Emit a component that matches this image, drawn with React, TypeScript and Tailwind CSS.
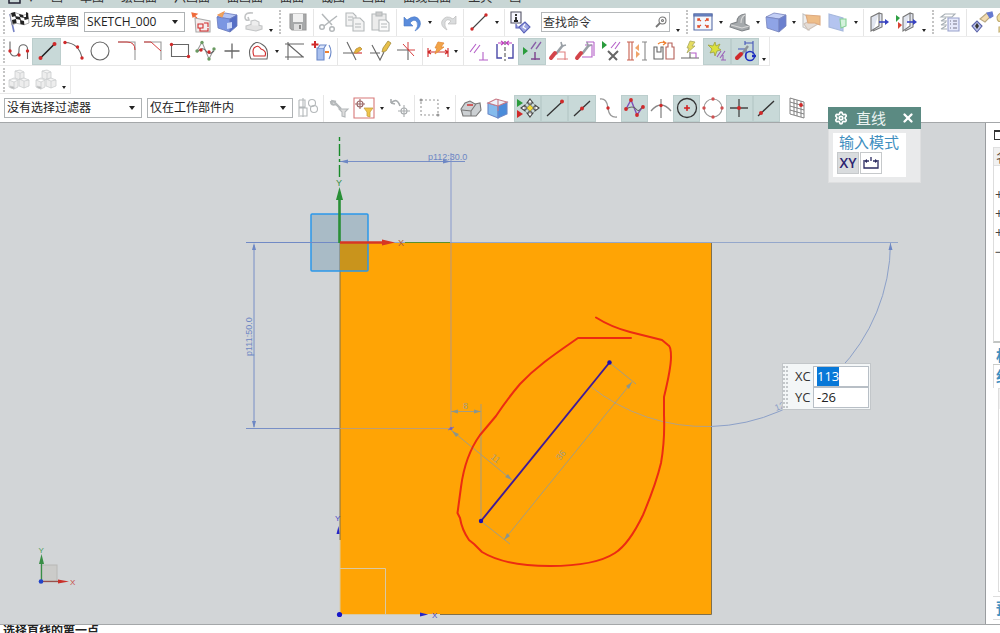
import { useEffect, useRef } from "react";
import type { ReactNode } from "react";
import { Settings, X } from "lucide-react";

const G = "#777";
const R = "#d02a2a";
const L = "#b4b8ba";
const M = "#b45fc8";

function Ic({ children }: { children: ReactNode }) {
  return (
    <svg viewBox="0 0 24 24" className="size-6 shrink-0" fill="none" stroke="#666" strokeWidth="1.1" aria-hidden="true">
      {children}
    </svg>
  );
}

function Dots({ at, c = R, r = 1.7 }: { at: number[][]; c?: string; r?: number }) {
  return (
    <>
      {at.map(([x, y]) => (
        <circle key={`${x}-${y}`} cx={x} cy={y} r={r} fill={c} stroke="none" />
      ))}
    </>
  );
}

function Tool({ label, on, children }: { label: string; on?: boolean; children: ReactNode }) {
  return (
    <button
      type="button"
      aria-label={label}
      className={
        on
          ? "flex h-[27px] min-w-0 flex-1 items-center justify-center border border-[#bccecd] bg-[#c8d9d8]"
          : "flex h-[27px] min-w-0 flex-1 items-center justify-center"
      }
    >
      <Ic>{children}</Ic>
    </button>
  );
}

function Drop({ label }: { label: string }) {
  return (
    <button type="button" aria-label={label} className="flex h-[27px] w-[10px] shrink-0 items-center justify-center">
      <svg viewBox="0 0 4 3" className="h-[3px] w-1" fill="#222">
        <path d="M0 0h4L2 3z" />
      </svg>
    </button>
  );
}

function More({ label }: { label: string }) {
  return (
    <button type="button" aria-label={label} className="flex h-[27px] w-[10px] shrink-0 items-end justify-center pb-1">
      <svg viewBox="0 0 4 3" className="h-[3px] w-1" fill="#222">
        <path d="M0 0h4L2 3z" />
      </svg>
    </button>
  );
}

const Sep = () => <div className="flex h-[27px] w-[5px] shrink-0 justify-center"><div className="w-px bg-[#e6e6e6]" /></div>;
const Grip = () => <div className="ml-[3px] h-6 w-0 shrink-0 border-l-2 border-dotted border-[#c4c4c4]" />;

function Pick({ label, value, cls }: { label: string; value: string; cls: string }) {
  return (
    <div className={`relative shrink-0 ${cls}`}>
      <select aria-label={label} className="block h-5 w-full appearance-none rounded-none border border-[#aeb2b4] bg-white px-0.5 text-xs leading-4 text-[#222] outline-none">
        <option>{value}</option>
      </select>
      <svg viewBox="0 0 6 4" className="pointer-events-none absolute top-2 right-[7px] h-1 w-[6px]" fill="#222">
        <path d="M0 0h6L3 4z" />
      </svg>
    </div>
  );
}

function Cube({ a, b, c, s }: { a: string; b: string; c: string; s: string }) {
  return (
    <g stroke={s} strokeWidth="0.8" strokeLinejoin="round">
      <path d="M2 7l8-4 12 2-7 4z" fill={a} />
      <path d="M2 7l13 2v13L3 18z" fill={b} />
      <path d="M15 9l7-4v11l-7 6z" fill={c} />
    </g>
  );
}

function GreyCubes() {
  return (
    <g stroke="#cccecf" strokeWidth="0.8" fill="#ededed">
      <path d="M8 3l5-1 4 2v6l-4 2-5-2zM8 3l5 2 4-1M13 5v6" />
      <path d="M2 12l5-2 4 2v7l-4 2-5-2zM2 12l5 2 4-2M7 14v7" />
      <path d="M12 11l5-1 5 2v6l-5 2-5-2zM12 11l5 2 5-1M17 13v7" />
      <path d="M3 18l4 1v2l-4-1.500z" fill="#b5b5b5" />
    </g>
  );
}

function Wrench() {
  return (
    <>
      <path d="M9 15L16 6" stroke="#9aa0a6" strokeWidth="2.6" />
      <path d="M14 3l1 4 4-1" stroke="#9aa0a6" strokeWidth="1.6" />
      <path d="M4 19l4-5" stroke="#d3444a" strokeWidth="4" strokeLinecap="round" />
    </>
  );
}

function Pencil() {
  return <path d="M14 13l1-4 5-7 3 2-5 8z" fill="#e8c04a" stroke="#a38b3c" strokeWidth="0.8" />;
}

function MainBar() {
  return (
    <div className="flex h-[29px] shrink-0 items-center overflow-hidden border-b border-[#ececec]">
      <Grip />
      <button type="button" className="flex h-[27px] w-[79px] shrink-0 items-center gap-px pl-[3px] text-xs whitespace-nowrap text-[#222]">
        <svg viewBox="0 0 22 24" className="h-6 w-[22px] shrink-0" aria-hidden="true">
          <path d="M2 4l4 18" stroke="#7480c4" strokeWidth="1.6" />
          <path d="M2 4q5-3 9 0t9-1l1 10q-5 3-9 1t-8 1z" fill="#fff" stroke="#777" strokeWidth="0.6" />
          <path d="M3 3l4-1 1 4-4 1zM11 4l4 1 1 3-4-1zM7 6l5 1 1 3-5-1zM16 7l4-1 .6 3-4 1zM4 10l4-1 .6 4-4 1zM12 10l4 1 .4 4-4-1zM18 2l2 1v3l-2 1z" fill="#222" />
        </svg>
        完成草图
      </button>
      <Pick label="草图名称" value="SKETCH_000" cls="w-[101px]" />
      <div className="ml-[3px] flex w-[78px] shrink-0">
        <Tool label="定向视图到草图">
          <path d="M6 8l15 3v11H7z" fill="#f4ecec" stroke="#aaa" />
          <path d="M9 14h5v4H9zM15 13h4v4M11 18v3h8v-3" stroke={R} />
          <path d="M4 5l4 3M3 3l1 4 4-3z" fill="#ef6a3a" stroke="#ef6a3a" />
        </Tool>
        <Tool label="定向视图到模型">
          <Cube a="#b3c4f5" b="#7b96e2" c="#566fc6" s="#6a7abc" />
          <path d="M12 13l5-1v6l-5 1z" fill="#cad7fa" stroke="none" />
          <path d="M3 5l6-3-2 5z" fill="#efa85a" stroke="#ef9a5a" />
        </Tool>
        <Tool label="重新附着">
          <path d="M5 16l6-2 10 2v3l-6 2-10-2z" fill="#e2e2e2" stroke="#c3c5c6" />
          <path d="M10 15v-4l4-1 4 2v4" fill="#eee" stroke="#c3c5c6" />
          <path d="M12 3q-8-1-8 4 0 4 4 3l-1-3" stroke="#c3c5c6" strokeWidth="1.6" />
        </Tool>
      </div>
      <More label="更多草图命令" />
      <Grip />
      <div className="ml-1 flex w-[26px] shrink-0">
        <Tool label="保存">
          <path d="M4 4h16v16H6l-2-2z" fill="#a7a9aa" stroke="#999" />
          <path d="M7 4h10v8H7z" fill="#f0f0f0" stroke="none" />
          <path d="M8 14h8v6H8z" fill="#ddd" stroke="none" /><path d="M13 15h2v4h-2z" fill="#888" stroke="none" />
        </Tool>
      </div>
      <Sep />
      <div className="flex w-[78px] shrink-0">
        <Tool label="剪切">
          <g stroke={L} strokeWidth="1.5"><path d="M7 16L20 6M5 4l10 11" /><circle cx="5" cy="17" r="2.3" /><circle cx="15" cy="19" r="2.3" /></g>
        </Tool>
        <Tool label="复制">
          <g stroke={L} fill="#f3f3f3"><path d="M3 3h7l3 3v10H3z" /><path d="M10 8h7l4 4v9H10z" /><path d="M5 7h5M5 10h4M12 14h6M12 17h6" /></g>
        </Tool>
        <Tool label="粘贴">
          <g stroke={L}><path d="M3 4h14v16H3z" fill="#ececec" /><path d="M7 2h6v4H7z" fill="#ccc" /><path d="M10 10h7l3 3v8H10z" fill="#fafafa" /><path d="M12 14h6M12 17h6" /></g>
        </Tool>
      </div>
      <Sep />
      <div className="flex w-[26px] shrink-0">
        <Tool label="撤销"><path d="M4 7v9h9l-3-3q4-5 7-1 2 4-2 9 7-4 5-10-4-8-13-1z" fill="#5a8cdc" stroke="#4a78c4" strokeWidth="0.6" /></Tool>
      </div>
      <Drop label="撤销列表" />
      <div className="flex w-[26px] shrink-0">
        <Tool label="重做"><path d="M20 6v8h-8l3-3q-4-3-6 1-1 4 2 8-7-4-5-9 4-7 11-2z" fill="#dadcdd" stroke="#bbb" strokeWidth="0.7" /></Tool>
      </div>
      <Sep />
      <div className="flex w-[26px] shrink-0">
        <Tool label="直线工具"><path d="M5 19L19 5" stroke="#444" /><Dots at={[[5, 19], [19, 5]]} /></Tool>
      </div>
      <Drop label="直线选项" />
      <Sep />
      <div className="flex w-[26px] shrink-0">
        <Tool label="命令查找器">
          <path d="M3 2h10v11H3z" stroke="#556" fill="#f6f6ff" /><path d="M8 4v2M8 7v4M6 11h4" stroke="#222" strokeWidth="1.8" />
          <path d="M8 14v4h4M11 17l6-5 5 5-6 6z" stroke="#5a62b8" fill="#9fa6e2" /><path d="M17 14l-2 3 3 2" stroke="#fff" />
        </Tool>
      </div>
      <div className="relative ml-2 w-[129px] shrink-0">
        <input aria-label="查找命令" placeholder="查找命令" className="block h-5 w-full border border-[#b5b8ba] bg-white px-px text-xs text-[#333] outline-none placeholder:text-[#333]" />
        <svg viewBox="0 0 12 12" className="pointer-events-none absolute top-1 right-[3px] size-3" fill="none" stroke="#777" strokeWidth="1.1">
          <circle cx="7.500" cy="4.500" r="3.500" /><circle cx="7.500" cy="4.500" r="1" /><path d="M5 7l-4 4" strokeWidth="1.8" />
        </svg>
      </div>
      <div className="ml-[3px] flex"><More label="更多查找选项" /></div>
      <Grip />
      <div className="ml-[2px] flex w-[26px] shrink-0">
        <Tool label="适合窗口">
          <path d="M3 4h18v16H3z" fill="#f4f7fc" stroke="#5a6ea8" /><path d="M3 4h18v2H3z" fill="#6f8fd0" stroke="#5a6ea8" />
          <path d="M7 9l3 2M7 11V9h2M17 9l-3 2M15 9h2v2M7 17l3-2M7 15v2h2M17 17l-3-2M15 17h2v-2" stroke="#e0502f" strokeWidth="1.400" />
        </Tool>
      </div>
      <Drop label="窗口选项" />
      <div className="flex w-[27px] shrink-0">
        <Tool label="编辑截面"><path d="M9 12q0-7 8-8v10l4 2v3l-7 2-12-4 1-3z" fill="#a6aaad" stroke="#808488" /><path d="M13 13q0-6 4-8M3 15l11 3 7-2" stroke="#d8d8d8" /></Tool>
      </div>
      <Drop label="截面选项" />
      <div className="flex w-[26px] shrink-0"><Tool label="着色"><Cube a="#c3cff6" b="#8fa4e6" c="#6a7fce" s="#7683bd" /></Tool></div>
      <Drop label="着色选项" />
      <div className="flex w-[52px] shrink-0">
        <Tool label="显示面"><path d="M3 4l6 3v13l-6-3z" fill="#eee" stroke="#c4c4c4" /><path d="M4 14l5-3 9-1v4l-10 6z" fill="#e4dcd6" stroke="#cfc2b8" /><path d="M6 5l14 1v9l-5-2H8z" fill="#eebd88" stroke="#ddaa80" /></Tool>
        <Tool label="层设置"><path d="M3 4l14 4v13L3 17z" fill="#b4c4ef" stroke="#a6b8dd" /><path d="M14 9h6v7l-5 2z" fill="#d4f2dc" stroke="#86cf96" /></Tool>
      </div>
      <Drop label="层选项" />
      <Sep />
      <div className="flex w-[53px] shrink-0">
        <Tool label="移动面"><path d="M4 7l8-4v13l-8 5zM6 21l9-4V4l-3-1" fill="#e1e5ef" stroke="#777" /><path d="M12 12h7" stroke="#3742c0" strokeWidth="1.6" /><path d="M18 9l4 3-4 3z" fill="#3742c0" stroke="none" /></Tool>
        <Tool label="拉出面"><path d="M9 7l7-4v13l-7 5zM11 21l8-4V4l-3-1" fill="#e1e5ef" stroke="#777" /><path d="M13 12h6" stroke="#3742c0" strokeWidth="1.6" /><path d="M19 9l4 3-4 3z" fill="#3742c0" stroke="none" /><path d="M2 5l4 3-4 4z" fill="#2d9f43" stroke="none" /><path d="M4 12l4 3-4 4z" fill="#d94434" stroke="none" /></Tool>
      </div>
      <More label="更多视图命令" />
      <Grip />
      <div className="ml-[2px] flex w-[28px] shrink-0">
        <Tool label="层列表"><g stroke="#a8b0b6"><path d="M3 7l4-3h10l-3 3zM3 11l5-3M3 15l5-3M3 19l5-3M3 11h6M3 15h6M3 19h6" /><path d="M10 8h11v13H10z" fill="#e6e9fa" stroke="#98a1cc" /><path d="M12 11h1M15 11h4M12 14h1M15 14h4M12 18h1M15 18h4" stroke="#778" /></g></Tool>
      </div>
      <Sep />
      <div className="flex w-[52px] shrink-0">
        <Tool label="测量距离"><path d="M2 16l5-5 5 5-5 6z" fill="#b9bfe8" stroke="#5a62a8" /><path d="M7 13l-2 3 2 3 2-3z" fill="#333" stroke="none" /><path d="M10 9l7-6 3 4-5 5z" fill="#f3dcb0" stroke="#b9a880" /><path d="M17 3l5-1 1 4-3 2z" fill="#667ad0" stroke="#667ad0" /></Tool>
        <Tool label="测量角度"><path d="M1 7q3-6 8-3l-3 7q-5 2-5-4zM3 17l7-2v5l-7 2z" fill="#f0dfa0" stroke="#c0ac70" /></Tool>
      </div>
    </div>
  );
}

function SketchBar() {
  return (
    <div className="flex h-[29px] shrink-0">
      <div className="flex h-[29px] items-center border-r border-b border-[#e8e8e8]">
        <Grip />
        <div className="ml-px flex w-[266px] shrink-0">
          <Tool label="轮廓"><path d="M3 2.500V12a4.500 5 0 0 0 9 0V10a4 4 0 0 1 8.500 0V20" /><Dots at={[[3, 12], [12, 16], [20.500, 12]]} /></Tool>
          <Tool label="直线" on><path d="M5.500 19L19.500 5" stroke="#222" strokeWidth="1.600" /><Dots at={[[5.500, 19], [19.500, 5]]} r={2} /></Tool>
          <Tool label="圆弧"><path d="M3 3.500Q17 4 20 19" /><Dots at={[[3, 3.500], [15.500, 8], [20, 19]]} /></Tool>
          <Tool label="圆"><circle cx="12" cy="12" r="9" /></Tool>
          <Tool label="圆角"><path d="M3 3h17v18" stroke="#999" /><path d="M3 3h9q8 0 8 8" stroke={R} strokeWidth="0.900" /></Tool>
          <Tool label="倒斜角"><path d="M3 3h17v18" stroke="#999" /><path d="M3 3h7l10 9" stroke={R} strokeWidth="0.900" /></Tool>
          <Tool label="矩形"><path d="M3.500 5.500h17v12h-17z" /><Dots at={[[3.500, 5.500], [20.500, 17.500]]} /></Tool>
          <Tool label="艺术样条"><path d="M3 12L8 3l7 17 5-10" stroke="#999" /><path d="M3 13q6-6 9-1t8 0" /><Dots at={[[3, 12], [8, 3.500], [15, 20], [20, 10]]} c="#6a9a62" /><Dots at={[[7, 11], [15, 13]]} /></Tool>
          <Tool label="点"><path d="M12 4.500v15M4.500 12h15" strokeWidth="1.300" /></Tool>
          <Tool label="偏置曲线"><path d="M4 20q-3-7 0-12 5-8 12-2 6 4 4 14z" /><path d="M7 17q-2-5 0-8 4-4 7 1 6 2 4 7z" stroke={R} /></Tool>
        </div>
        <Drop label="曲线选项" />
        <div className="flex w-[53px] shrink-0">
          <Tool label="派生直线"><path d="M2 5h19M5 3v18M2 18h19M5 5l15 13" /></Tool>
          <Tool label="添加现有曲线"><path d="M7 9h7v12H7z" fill="#a9c0ee" stroke="#6a88c8" /><path d="M8 9l2-3h6l-2 3" fill="#dce6fb" stroke="#6a88c8" /><path d="M5 2v7M1.500 5.500h7" stroke="#d02a2a" strokeWidth="2" /><path d="M19 6q4 7 0 14" stroke="#6a88c8" /><path d="M15 13h4" stroke="#ef8030" strokeWidth="2" /></Tool>
        </div>
        <Sep />
        <div className="flex w-[80px] shrink-0">
          <Tool label="快速修剪"><path d="M6 3l9 18M2 14h11" /><path d="M13 14h8" stroke={R} /><path d="M13 14l2-4 4-2 2 2-5 4z" fill="#e8b53a" stroke="#b38b3c" strokeWidth="0.800" /></Tool>
          <Tool label="快速延伸"><path d="M4 6l8 15 4-8M2 14h10" /><Pencil /></Tool>
          <Tool label="制作拐角"><path d="M2 11h11v10" /><path d="M13 3v8h7M8 5l11 12" stroke={R} strokeWidth="0.900" /></Tool>
        </div>
        <Sep />
        <div className="flex w-[26px] shrink-0"><Tool label="快速尺寸"><path d="M2 9v9M22 9v9M2 13h20M5 11l-3 2 3 2M19 11l3 2-3 2" stroke={R} /><path d="M12 3l6 1-3 4h3L9 15l2-6H9z" fill="#f2a448" stroke="#e38b38" strokeWidth="0.800" /></Tool></div>
        <Drop label="尺寸选项" />
        <Sep />
        <div className="flex w-[293px] shrink-0">
          <Tool label="几何约束"><g stroke={M}><path d="M3 13l6-8M7 14l6-8M16 13v8M12 21h9" /></g></Tool>
          <Tool label="设为对称"><path d="M4 5v14h5M20 5v14h-5" stroke="#4a49a8" strokeWidth="1.400" /><path d="M12 2v20" stroke="#555" strokeDasharray="4 2" /><path d="M5 4h5M14 4h5M8 2l3 2-3 2M16 2l-3 2 3 2" stroke="#c040c0" /></Tool>
          <Tool label="显示草图约束" on><path d="M3 8l5 4-5 4z" fill="#2a9c3c" stroke="none" /><path d="M11 10l5-7M16 10l5-7" stroke="#8a60a8" strokeWidth="1.300" /><path d="M15 13v8M11 20h9" stroke="#804a90" strokeWidth="1.500" /></Tool>
          <Tool label="自动约束"><path d="M12 13h6v8M10 20h11" stroke="#e08080" /><Wrench /></Tool>
          <Tool label="自动标注尺寸"><path d="M12 6h7v12H9M13 3h8M21 3v14" stroke={M} /><Wrench /></Tool>
          <Tool label="显示移除约束"><path d="M2 2l5 4-5 4z" fill="#2a9c3c" stroke="none" /><path d="M11 9l5-6M15 10l5-7" stroke={M} /><path d="M8 12l9 9M18 12L9 21" stroke="#666" strokeWidth="2" /></Tool>
          <Tool label="动画尺寸"><path d="M3 3v18M6 3v18M1 3h7M1 21h7" stroke="#c8604f" /><path d="M19 3v18M16 3h5M16 21h5" stroke="#888" /><path d="M13 5l-4 4 4 3zM10 12l4 3-4 4z" fill="#f0a46a" stroke="none" /></Tool>
          <Tool label="转换为参考"><path d="M2 8h3v5h4V8h2v12H2z" /><path d="M14 20V8h2V4h4v4h2v12z" stroke="#b56058" /><path d="M6 5q3-3 7-1M11 2l3 2-3 2" stroke="#ef8030" /></Tool>
          <Tool label="备选解"><path d="M3 19h18M12 19v-6" /><path d="M13 14h5v5" stroke={M} /><path d="M12 2l5 1-3 4h3L9 14l2-5H9z" fill="#e5dc60" stroke="#aaa860" strokeWidth="0.800" /></Tool>
          <Tool label="推断约束" on><path d="M3 6l5 1 2-4 1 4 4-2-2 4 3 2-4 1-2 5-1-4-4 1 2-4z" fill="#dbe03c" stroke="#9da240" strokeWidth="0.800" /><path d="M12 18l4-6M15 19l5-7M18 16v5M16 21h5" stroke="#9a60b8" /></Tool>
          <Tool label="连续自动标注" on><path d="M5 10h8v9M12 4h8v11M12 2v4M20 2v4" stroke="#4555b8" /><circle cx="17" cy="17" r="4.500" stroke="#2030c0" strokeWidth="1.500" /><path d="M9 15l6-8" stroke="#8d9298" strokeWidth="2.400" /><path d="M4 19l4-4" stroke="#d02a2a" strokeWidth="4" strokeLinecap="round" /><path d="M19 17h4" stroke="#2030c0" strokeWidth="2.400" /></Tool>
        </div>
        <More label="更多约束" />
      </div>
    </div>
  );
}

function SelectionBar() {
  return (
    <div className="flex h-[28px] shrink-0 items-center">
      <div className="ml-1 flex shrink-0 gap-[5px]">
        <Pick label="类型过滤器" value="没有选择过滤器" cls="w-[138px]" />
        <Pick label="选择范围" value="仅在工作部件内" cls="w-[146px]" />
      </div>
      <div className="ml-[2px] flex w-[26px] shrink-0"><Tool label="关联过滤"><g stroke={L}><path d="M3 4v17M3 4h6v7H3M3 12h8v8H4M7 2v19" /><circle cx="16" cy="7" r="3.500" /><circle cx="18" cy="13" r="3.500" /></g></Tool></div>
      <Sep />
      <div className="flex w-[51px] shrink-0">
        <Tool label="重置过滤器"><path d="M4 5q0 5 5 3l5 5M4 5l5 1" stroke={L} strokeWidth="2.400" /><path d="M12 13h9l-3 3v5l-3-1v-4z" fill="#ddd" stroke={L} /></Tool>
        <Tool label="常规选择过滤器"><path d="M2 2h20v20H2z" stroke="#d87878" /><circle cx="8" cy="8" r="3" stroke="#966" /><path d="M8 3v10M3 8h10" stroke="#966" /><path d="M12 12h9l-3 4v5l-3-1v-4z" fill="#efc54a" stroke="#c8a040" strokeWidth="0.800" /></Tool>
      </div>
      <Drop label="过滤选项" />
      <div className="flex w-[25px] shrink-0"><Tool label="取消选择"><g stroke="#a8acae"><path d="M3 7q6-6 9 3M3 7V3M3 7l4 1" strokeWidth="1.600" /><circle cx="16" cy="15" r="3" /><path d="M16 9v12M10 15h12" /></g></Tool></div>
      <Sep />
      <div className="flex w-[26px] shrink-0"><Tool label="矩形选择"><path d="M3 4h17v15H3z" stroke="#999" strokeDasharray="2 2" /><Dots at={[[3, 4], [20, 19]]} c="#999" r={1.500} /></Tool></div>
      <Drop label="选择形状" />
      <Sep />
      <div className="flex w-[53px] shrink-0">
        <Tool label="高亮显示"><path d="M2 13l4-6 5-2 5 3 5-1 1 7-5 6H4z" fill="#ccd0d3" stroke="#777" /><path d="M3 14l9 1 5-7M12 15v5" stroke="#777" /><path d="M8 9h6" stroke={R} strokeWidth="1.400" /></Tool>
        <Tool label="在实体内选择"><path d="M2 7l10 3v12L2 18z" fill="#85bbec" stroke="#6a88c8" /><path d="M12 10l9-4v12l-9 4z" fill="#4a8cda" stroke="#6a88c8" /><path d="M2 7l8-4 11 3-9 4z" fill="#eef3fb" stroke="#c87884" /><path d="M12 3v12" stroke="#c87884" /></Tool>
      </div>
      <div className="ml-[3px] flex w-[266px] shrink-0">
        <Tool label="启用捕捉点" on><path d="M1 3l6 4-6 4z" fill="#2a9c3c" stroke="none" /><path d="M1 14l6 4-6 4z" fill="#d02a2a" stroke="none" /><path d="M14 3l3 4h-2v2h-2V7h-2zM14 21l3-4h-2v-2h-2v2h-2zM5 12l4-3v2h2v2H9v2zM23 12l-4-3v2h-2v2h2v2z" fill="#fff" stroke="#444" /><path d="M14 9l3 3-3 3-3-3z" fill="#f4dc3c" stroke="#b0a030" strokeWidth="0.800" /></Tool>
        <Tool label="端点" on><path d="M4 20L19 6" stroke="#333" strokeWidth="1.300" /><Dots at={[[19, 5.500]]} r={2} /></Tool>
        <Tool label="中点" on><path d="M4 20L20 5" stroke="#333" strokeWidth="1.300" /><Dots at={[[12, 12.500]]} r={2} /></Tool>
        <Tool label="控制点"><path d="M4 3q7-1 8 9 1 10 9 9" stroke="#999" strokeWidth="1.300" /><Dots at={[[12, 12]]} /></Tool>
        <Tool label="极点" on><path d="M4 13L9 4l6 15 6-9" stroke="#8050b8" strokeWidth="1.400" /><path d="M4 13q7-4 10 0t7-3" /><Dots at={[[4, 13], [9, 4], [15, 19], [21, 11]]} r={1.900} /></Tool>
        <Tool label="交点"><path d="M12 3v19M2 15q10-12 20 0" stroke="#888" strokeWidth="1.300" /><Dots at={[[12, 9.500]]} /></Tool>
        <Tool label="圆弧中心" on><circle cx="12" cy="12" r="9.500" stroke="#333" strokeWidth="1.300" /><path d="M12 9v6M9 12h6" stroke={R} strokeWidth="1.500" /><Dots at={[[12, 12]]} r={1.500} /></Tool>
        <Tool label="象限点"><circle cx="12" cy="12" r="9" stroke="#999" /><Dots at={[[12, 3], [3, 12], [21, 12], [12, 21]]} c="#cf5050" /></Tool>
        <Tool label="现有点" on><path d="M12 3v18M3 12h18" stroke="#444" strokeWidth="1.300" /><Dots at={[[12, 12]]} r={2} /></Tool>
        <Tool label="曲线上的点" on><path d="M4 20L20 5" stroke="#333" strokeWidth="1.300" /><Dots at={[[7, 17]]} r={2} /></Tool>
      </div>
      <div className="ml-1 flex w-[26px] shrink-0"><Tool label="捕捉到栅格"><path d="M5 2l14 4v16L5 18zM5 6l14 4M5 10l14 4M5 14l14 4M9 3v16M12 4v16M16 5v16" strokeWidth="0.900" stroke={G} /><Dots at={[[16, 9]]} r={1.900} /></Tool></div>
    </div>
  );
}

function Drawing() {
  const dim = "#6d87c4";
  const soft = "#a39c83";
  return (
    <svg className="absolute inset-0 h-full w-full" fill="none" fontFamily="'Liberation Sans', sans-serif" role="img" aria-label="草图视图">
      <g transform="translate(0 -123)">
        <rect x="340" y="243" width="371" height="371" fill="#ffa405" />
        <path d="M711.500 243v371.500H440M340 243v297" stroke="#80704c" />
        <path d="M340 540v74.500h88M340 568.500h45.500v46" stroke="#d8c9a5" />
        <rect x="311" y="214" width="57" height="57" fill="#5686a5" fillOpacity="0.33" />
        <rect x="340" y="243" width="28" height="28" fill="#c9941c" />
        <rect x="311" y="214" width="57" height="57" rx="1" stroke="#2b98ea" strokeWidth="1.500" />
        <g stroke={dim} strokeWidth="0.900">
          <path d="M246 242.500h652" stroke="#8ca2ca" />
          <path d="M246 242.500h92M246 428.500h94M254 245v182M340 161.500h125" />
          <path d="M451 153v90" stroke="#7f92cc" />
          <path d="M451 243v187" stroke="#ad9695" />
          <path d="M340 428.500h110" stroke="#b59c80" />
        </g>
        <path d="M254 243l-2 7h4zM254 428l-2-7h4zM340 161.500l8-2v4zM451 161.500l-8-2v4z" fill={dim} />
        <text x="428" y="160" fontSize="9" fill={dim}>p112:30.0</text>
        <text transform="translate(252 356) rotate(-90)" fontSize="9" fill={dim}>p111:50.0</text>
        <path d="M339.500 137v4M339.500 144v12M339.500 159v3M339.500 165v12" stroke="#178a29" strokeWidth="1.400" />
        <text x="336" y="186" fontSize="9" fill="#368e45">Y</text>
        <path d="M339.500 243v-45" stroke="#298f36" strokeWidth="2.600" />
        <path d="M339.500 187l-3.500 13h7z" fill="#298f36" />
        <path d="M340 242.500h44" stroke="#d73724" strokeWidth="2.400" />
        <path d="M395 242.500l-13-3v6z" fill="#d73724" />
        <text x="398" y="246" fontSize="9" fill="#b05b38">X</text>
        <path d="M405 242.500h45" stroke="#5a902c" />
        <path d="M890.500 243A184.500 184.500 0 0 1 711 426.500" stroke="#8ca0c8" />
        <path d="M711 426.500A184.500 184.500 0 0 1 590 386" stroke="#b4a183" />
        <path d="M890.500 243l-2 7h4z" fill={dim} />
        <text transform="translate(776 411) rotate(-20)" fontSize="9" fill="#8ca0c8">129</text>
        <g stroke={soft} strokeWidth="1">
          <path d="M451 411.500h30M481 404v117M451 430l61 50M610 363l26 21M482 522l28 22M504 540l128-158" />
        </g>
        <path d="M451 411.500l7-2v4zM481 411.500l-7-2v4zM452 431l7 3-3 3zM512 480l-7-3 3-3zM504 540l6-4-3-3zM632 382l-6 4 3 3z" fill="#8c958a" />
        <g fontSize="9" fill={soft}>
          <text x="463" y="409">8</text>
          <text transform="translate(490 458) rotate(39)">11</text>
          <text transform="translate(560 461) rotate(-51)">36</text>
        </g>
        <path d="M448 430l6-3" stroke="#7b71bd" />
        <circle cx="451" cy="428.500" r="1.500" fill="#7761bd" />
        <path d="M481 521L609.500 362.500" stroke="#3f1a98" strokeWidth="1.900" />
        <circle cx="481" cy="521" r="2.200" fill="#1c10b0" /><circle cx="609.500" cy="362.500" r="2.200" fill="#1c10b0" />
        <path d="M631 338H578C558 352 538 365 520 384Q508 398 496 416L480 435Q465 456 461 487L457.500 513L460 518Q462 530 469 540L474 544L482 552Q505 566 550 566T615 553Q629 544 643 515Q656 484 661 463Q665 440 664 415L664 397Q671 368 671 357T668 345L662 340L630 332Q611 327 596 317.500" stroke="#ec2b12" strokeWidth="2" strokeLinejoin="round" strokeLinecap="round" />
        <circle cx="339.500" cy="614.500" r="2.600" fill="#1717c8" />
        <path d="M428 614.500l-8-2v4zM338.500 526l-2 8h3z" fill="#2525c8" />
        <text x="432" y="618" fontSize="8" fill="#4545c8">X</text>
        <text x="335" y="521" fontSize="8" fill="#4545c8">Y</text>
        <rect x="41" y="565" width="16" height="16" fill="#cbcbc9" stroke="#b8b8b5" />
        <path d="M41.500 581v-17" stroke="#388e45" strokeWidth="1.300" />
        <path d="M41.500 554l-2.500 10h5z" fill="#388e45" />
        <path d="M41 581.500h18" stroke="#98504b" strokeWidth="1.300" />
        <path d="M69 581.500l-11-2v4z" fill="#c8302a" />
        <text x="70" y="585" fontSize="8" fill="#c84c48">X</text>
        <text x="38.500" y="553" fontSize="8" fill="#4a9c58">Y</text>
        <circle cx="41" cy="581.500" r="2.300" fill="#2143c9" />
      </g>
    </svg>
  );
}

function LineDialog() {
  return (
    <section aria-label="直线" className="absolute top-[107px] right-[79px] h-[76px] w-[93px] border border-[#dedfe0] bg-[#e9eaeb]">
      <header className="-mx-px -mt-px flex h-[22px] items-center bg-[#5b8a82] pr-1.5 pl-1.5 text-white">
        <Settings className="size-[14px]" strokeWidth={3} />
        <h2 className="ml-2 flex-1 text-[15px] leading-5 text-[#eaf3f1]">直线</h2>
        <button type="button" aria-label="关闭"><X className="size-[14px]" strokeWidth={4} /></button>
      </header>
      <div className="mt-1 ml-1 h-11 w-[73px] bg-white px-1">
        <h3 className="h-[19px] pl-0.5 text-[15px] leading-[19px] whitespace-nowrap text-[#3f8fc0]">输入模式</h3>
        <div className="flex gap-px">
          <button type="button" className="size-[22px] border border-[#c6c9cb] bg-[#d9dcde] text-sm leading-5 font-semibold text-[#2b2370]">XY</button>
          <button type="button" aria-label="参数模式" className="flex size-[22px] items-center justify-center border border-[#c6c9cb]">
            <svg viewBox="0 0 18 16" className="h-4 w-[18px]" fill="none" stroke="#2a2a60" strokeWidth="1.300">
              <path d="M2 5v8h14V5M4 6h3M11 6h3M9 2v4" /><path d="M2 6l3-2v4zM16 6l-3-2v4z" fill="#2a2a60" stroke="none" />
            </svg>
          </button>
        </div>
      </div>
    </section>
  );
}

function CoordinateBox() {
  const first = useRef<HTMLInputElement>(null);
  useEffect(() => {
    first.current?.focus();
    first.current?.select();
  }, []);
  const field = "h-[21px] w-14 border border-[#b8bfc6] bg-white px-[3px] text-[13px] text-[#222] outline-none selection:bg-[#0878d8] selection:text-white";
  return (
    <form className="absolute top-[240px] left-[782px] flex h-[47px] w-[89px] items-center border border-[#c2c6c9] bg-[#f3f6f7]">
      <div className="h-[42px] w-[5px] border-x-2 border-dotted border-[#c3c7ca]" />
      <div className="ml-[7px] grid grid-cols-[18px_56px] text-[13px] leading-[21px] text-[#333]">
        <label htmlFor="xc">XC</label>
        <input id="xc" ref={first} defaultValue="113" className={field} />
        <label htmlFor="yc">YC</label>
        <input id="yc" defaultValue="-26" className={field} />
      </div>
    </form>
  );
}

function Navigator() {
  return (
    <aside className="flex w-[15px] shrink-0 flex-col overflow-hidden border-l border-[#9a9da0] bg-white pl-[7px] text-[15px] whitespace-nowrap text-[#3f8fc0]">
      <div className="h-6 shrink-0 pt-[7px]">
        <div className="ml-px h-[10px] w-3 border border-t-2 border-[#333]" />
      </div>
      <div className="h-[196px] w-40 shrink-0 border-b-2 border-l border-[#c2c5c3] border-l-[#ddd]">
        <div className="h-[19px] border-y border-[#e0e0e0] bg-[#f1f1f1] pl-0.5 text-sm leading-[17px] text-[#665044]">名称</div>
        <ul className="pt-[19px] pl-px text-sm leading-[19px] text-[#444]">
          <li>+ 历史记录模式</li>
          <li>+ 模型视图</li>
          <li>+ 摄像机</li>
          <li>− 模型历史记录</li>
        </ul>
      </div>
      <h2 className="h-[22px] w-40 shrink-0 border-b border-[#c9cbc8] pl-[3px] leading-[24px] font-bold">相依性</h2>
      <h2 className="h-[23px] w-40 shrink-0 border-l border-[#ddd] pl-[2px] leading-[23px] font-bold">细节</h2>
      <div className="ml-[5px] w-40 flex-1 border-y border-l border-[#ddd]"><div className="h-5 bg-[#f0f0f0]" /></div>
      <h2 className="mt-1 h-6 w-40 shrink-0 border-y border-[#ddd] pl-[3px] leading-[22px] font-bold">预览</h2>
      <div className="h-1 shrink-0" />
    </aside>
  );
}

export default function App() {
  return (
    <div className="relative flex h-screen flex-col overflow-hidden bg-white font-['Open_Sans','Noto_Sans_CJK_SC',sans-serif]">
      <nav aria-label="菜单" className="flex h-2 shrink-0 items-end overflow-hidden bg-[#c8d6d5] pb-1 pl-[7px] text-xs leading-3 text-[#333]">
        <svg viewBox="0 0 14 12" className="h-3 w-[14px] shrink-0" fill="none" stroke="#223" strokeWidth="1.500"><path d="M2 0v11h11V0M5 2v5h5" /></svg>
        <div className="ml-[7px] flex gap-[17px] whitespace-nowrap">
          <a href="#file">▾</a><a href="#view">画</a><a href="#sketch">草图</a><a href="#draw">绘画面</a>
          <a href="#surface">六画面</a><a href="#model">曲画面</a><a href="#shape">曲面</a><a href="#section">截图</a><a href="#window">画面</a><a href="#curve">曲线画面</a><a href="#tool">工具</a><a href="#help">画</a>
        </div>
      </nav>
      <MainBar />
      <SketchBar />
      <div className="flex h-[28px] shrink-0">
        <div className="flex w-[71px] items-center border-r border-b border-[#e8e8e8]">
          <Grip />
          <div className="flex w-[54px] shrink-0">
            <Tool label="装配约束"><GreyCubes /></Tool>
            <Tool label="移动组件"><GreyCubes /></Tool>
          </div>
          <More label="更多装配命令" />
        </div>
      </div>
      <SelectionBar />
      <div className="flex min-h-0 flex-1 border-y border-[#a4a7a9]">
        <main className="relative min-w-0 flex-1 overflow-hidden bg-[#d2d5d7]">
          <Drawing />
          <CoordinateBox />
        </main>
        <Navigator />
      </div>
      <footer className="h-2 shrink-0 overflow-hidden pl-[3px] text-xs leading-3 font-bold text-[#222]">选择直线的第一点</footer>
      <LineDialog />
    </div>
  );
}
